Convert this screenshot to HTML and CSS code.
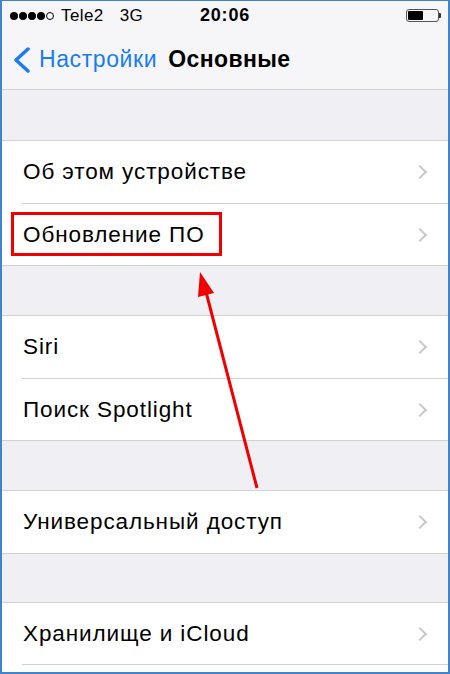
FILE: index.html
```html
<!DOCTYPE html>
<html lang="ru">
<head>
    <meta charset="UTF-8">
    <meta name="viewport" content="width=device-width, initial-scale=1.0">
    <title>Основные</title>
    <link rel="stylesheet" href="styles.css">
</head>
<body>
    <div class="screen">
        <div class="status-bar">
            <div class="status-left">
                <span class="signal">
                    <i class="dot"></i><i class="dot"></i><i class="dot"></i><i class="dot"></i><i class="dot empty"></i>
                </span>
                <span class="carrier">Tele2</span>
                <span class="network">3G</span>
            </div>
            <div class="status-time">20:06</div>
            <div class="status-right">
                <span class="battery"><span class="battery-level"></span></span>
                <span class="battery-nub"></span>
            </div>
        </div>

        <div class="nav-bar">
            <a class="nav-back" href="#">
                <svg class="back-chevron" viewBox="0 0 18 26">
                    <path d="M15 2 L3 13 L15 24" fill="none" stroke="currentColor" stroke-width="3.5" stroke-linecap="round" stroke-linejoin="round"/>
                </svg>
                <span>Настройки</span>
            </a>
            <h1 class="nav-title">Основные</h1>
        </div>

        <div class="spacer first"></div>
        <ul class="group">
            <li class="row"><span>Об этом устройстве</span><i class="chevron"></i></li>
            <li class="row"><span>Обновление ПО</span><i class="chevron"></i></li>
        </ul>

        <div class="spacer"></div>
        <ul class="group">
            <li class="row"><span>Siri</span><i class="chevron"></i></li>
            <li class="row"><span>Поиск Spotlight</span><i class="chevron"></i></li>
        </ul>

        <div class="spacer"></div>
        <ul class="group">
            <li class="row"><span>Универсальный доступ</span><i class="chevron"></i></li>
        </ul>

        <div class="spacer short"></div>
        <ul class="group open">
            <li class="row"><span>Хранилище и iCloud</span><i class="chevron"></i></li>
        </ul>

        <!-- annotation on top of the screenshot -->
        <div class="highlight"></div>
        <svg class="pointer" viewBox="0 0 450 674">
            <line x1="257" y1="488" x2="205" y2="288" stroke="#f00000" stroke-width="3"/>
            <polygon points="200,272 214,293 198,297" fill="#f00000"/>
        </svg>
    </div>
</body>
</html>
```

FILE: styles.css
```css
:root {
    --frame-color: #3d86cf;
    --bar-background: #f6f6f8;
    --group-background: #efeff4;
    --line-color: #d1d1d6;
    --ios-blue: #1a7cf5;
    --chevron-color: #c7c7cc;
    --mark-red: #f00000;
}

* {
    margin: 0;
    padding: 0;
    box-sizing: border-box;
}

body {
    font-family: 'Liberation Sans', Arial, sans-serif;
    background: #ffffff;
    color: #000000;
}

.screen {
    position: relative;
    width: 450px;
    height: 674px;
    overflow: hidden;
    background: #ffffff;
    border: 2px solid var(--frame-color);
    border-top-width: 1px;
}

/* Status bar */
.status-bar {
    height: 29px;
    display: flex;
    align-items: center;
    justify-content: space-between;
    padding: 0 7px 0 8px;
    background: var(--bar-background);
    font-size: 17px;
    position: relative;
}

.status-left {
    display: flex;
    align-items: center;
    gap: 7px;
}

.signal {
    display: flex;
    gap: 1px;
}

.dot {
    width: 8px;
    height: 8px;
    border-radius: 50%;
    background: #000000;
}

.dot.empty {
    background: transparent;
    border: 1px solid #000000;
}

.carrier {
    letter-spacing: 0.4px;
}

.network {
    margin-left: 9px;
    letter-spacing: 0.4px;
}

.status-time {
    position: absolute;
    left: 0;
    right: 0;
    text-align: center;
    font-size: 18px;
    font-weight: bold;
    letter-spacing: 0.8px;
    pointer-events: none;
}

.status-right {
    display: flex;
    align-items: center;
}

.battery {
    width: 33px;
    height: 13px;
    border: 1px solid #555555;
    border-radius: 3px;
    padding: 1px;
    display: flex;
}

.battery-level {
    width: 15px;
    background: #000000;
    border-radius: 1px;
}

.battery-nub {
    width: 2px;
    height: 5px;
    background: #333333;
    border-radius: 0 1px 1px 0;
}

/* Navigation bar */
.nav-bar {
    height: 60px;
    display: flex;
    align-items: center;
    padding: 0 0 0 11px;
    background: var(--bar-background);
    border-bottom: 1px solid var(--line-color);
}

.nav-back {
    display: flex;
    align-items: center;
    gap: 8px;
    color: var(--ios-blue);
    text-decoration: none;
    font-size: 23px;
    letter-spacing: 0.6px;
}

.back-chevron {
    width: 18px;
    height: 26px;
}

.nav-title {
    margin-left: 11px;
    font-size: 23px;
    font-weight: bold;
    letter-spacing: 0.4px;
}

/* Settings list */
.spacer {
    height: 49px;
    background: var(--group-background);
}

.spacer.first {
    height: 50px;
}

.spacer.short {
    height: 48px;
}

.group {
    list-style: none;
    border-top: 1px solid var(--line-color);
    border-bottom: 1px solid var(--line-color);
}

.group.open {
    border-bottom: none;
}

.row {
    height: 62px;
    display: flex;
    align-items: center;
    justify-content: space-between;
    padding: 0 22px 0 21px;
    font-size: 22.5px;
    letter-spacing: 0.9px;
    position: relative;
}

.row + .row {
    border-top: 1px solid var(--line-color);
    margin-left: 20px;
    padding-left: 1px;
}

.group.open .row {
    border-bottom: 1px solid var(--line-color);
    margin-left: 20px;
    padding-left: 1px;
}

.chevron {
    width: 10px;
    height: 10px;
    border-top: 2px solid var(--chevron-color);
    border-right: 2px solid var(--chevron-color);
    transform: rotate(45deg);
    margin-right: 1px;
}

/* Annotation overlay */
.highlight {
    position: absolute;
    left: 9px;
    top: 211px;
    width: 211px;
    height: 44px;
    border: 3px solid var(--mark-red);
}

.pointer {
    position: absolute;
    left: -2px;
    top: -1px;
    width: 450px;
    height: 674px;
    pointer-events: none;
}
```
